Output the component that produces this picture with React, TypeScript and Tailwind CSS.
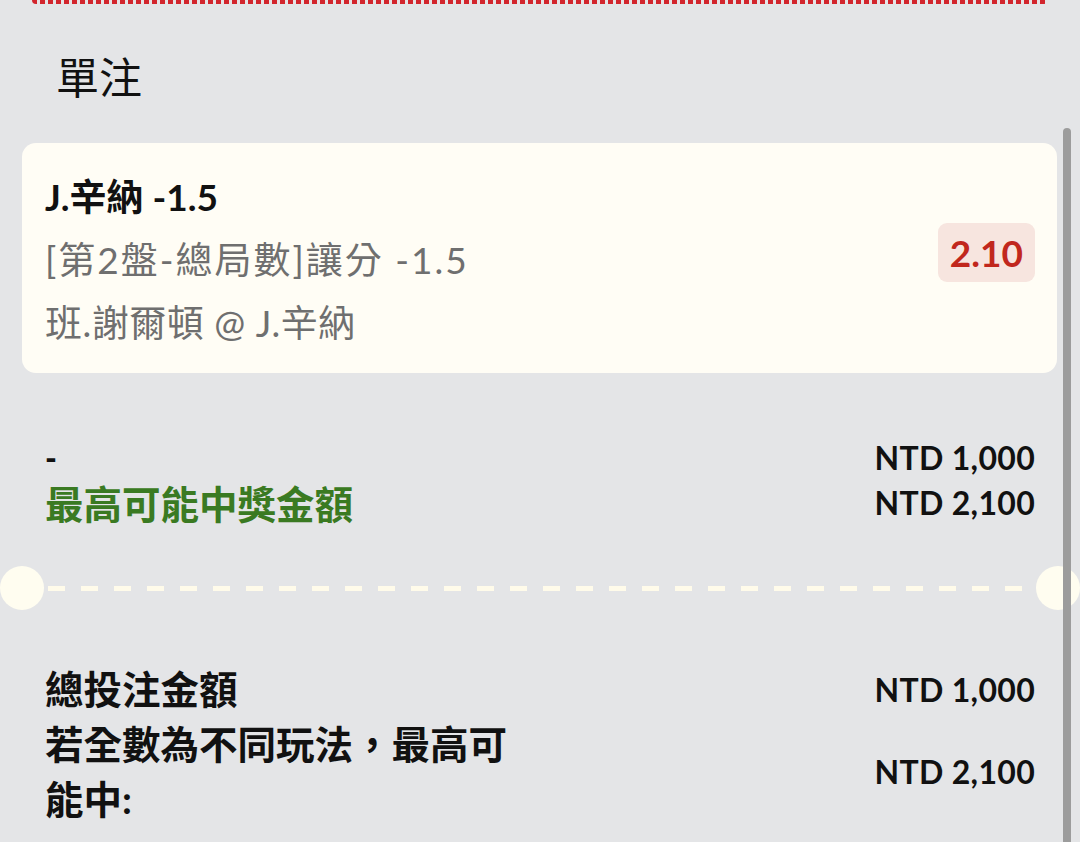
import React from 'react';

const Separator = () => (
  <div className="flex items-center h-[44px]">
    <div className="w-[44px] h-[44px] rounded-full bg-[#fffdf0] shrink-0" />
    <div className="flex-1 h-[5px] mx-[4px] bg-[repeating-linear-gradient(90deg,#fffbea_0_17px,transparent_17px_33px)]" />
    <div className="w-[44px] h-[44px] rounded-full bg-[#fffdf0] shrink-0" />
  </div>
);

const App = () => {
  const font = "font-['Lato','Noto_Sans_CJK_TC',sans-serif]";

  return (
    <div className={`relative w-full h-[842px] overflow-hidden bg-[#e4e5e7] ${font}`}>
      {/* tail of the ticket above */}
      <div className="mx-[32px] h-[4px] rounded-b-[6px] bg-[repeating-linear-gradient(90deg,#d2252d_0_5px,transparent_5px_8px)]" />

      {/* Heading */}
      <div className="pl-[56px] pt-[44px] h-[139px]">
        <h2 className="text-[43px] leading-[54px] text-[#111] font-normal font-['Noto_Sans_CJK_TC',sans-serif]">單注</h2>
      </div>

      {/* Selection card */}
      <div className="ml-[22px] mr-[23px] h-[230px] rounded-[14px] bg-[#fffdf5] pl-[23px] pr-[22px] pt-[21px] pb-[19px] flex items-center">
        <div className="flex-1 flex flex-col">
          <div className="h-[63px] leading-[63px] text-[37px] font-bold text-[#111] whitespace-nowrap">J.辛納 -1.5</div>
          <div className="h-[63px] leading-[63px] text-[37px] tracking-[2px] text-[#6f6f6f] whitespace-nowrap">[第2盤-總局數]讓分 -1.5</div>
          <div className="h-[63px] leading-[63px] text-[37px] tracking-[0.5px] text-[#6f6f6f] whitespace-nowrap">班.謝爾頓 @ J.辛納</div>
        </div>
        <div className="mb-[13px] h-[59px] px-[12px] rounded-[9px] bg-[#f7e5df] flex items-center text-[37px] font-bold text-[#c1271d]">
          2.10
        </div>
      </div>

      {/* Stake / potential win */}
      <div className="mt-[62px] pl-[45px] pr-[45px]">
        <div className="flex justify-between items-center h-[45px]">
          <span className="text-[32px] font-black text-[#111] leading-none">-</span>
          <span className="text-[32px] font-bold text-[#111] tracking-[0.3px]">NTD 1,000</span>
        </div>
        <div className="flex justify-between items-center h-[45px]">
          <span className="text-[38.5px] font-bold text-[#3a7a22] font-['Noto_Sans_CJK_TC',sans-serif]">最高可能中獎金額</span>
          <span className="text-[32px] font-bold text-[#111] tracking-[0.3px]">NTD 2,100</span>
        </div>
      </div>

      <div className="mt-[41px]">
        <Separator />
      </div>

      {/* Totals */}
      <div className="mt-[52px] pl-[45px] pr-[45px]">
        <div className="flex justify-between items-center h-[55px]">
          <span className="text-[38.5px] font-bold text-[#111] leading-[55px]">總投注金額</span>
          <span className="text-[32px] font-bold text-[#111] tracking-[0.3px]">NTD 1,000</span>
        </div>
        <div className="flex justify-between items-center">
          <span className="w-[478px] text-[38.5px] font-bold text-[#111] leading-[55px]">若全數為不同玩法，最高可能中:</span>
          <span className="text-[32px] font-bold text-[#111] tracking-[0.3px]">NTD 2,100</span>
        </div>
      </div>

      {/* scrollbar */}
      <div className="absolute left-[1063px] top-[128px] w-[8px] h-[760px] rounded-t-full bg-[#9c9c9c]" />
    </div>
  );
};

export default App;
